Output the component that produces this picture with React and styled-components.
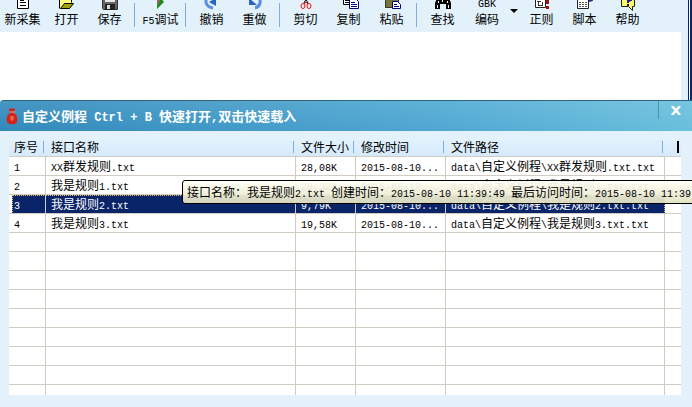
import React from 'react'
import styled, { css, createGlobalStyle } from 'styled-components'

const Navy = '#0a246a'
const Sky = '#e2f1fa'
const Line = '#d0ccc4'
const Focus = '#f0c060'

const files = [
  { id: 1, name: 'XX群发规则.txt', size: '28,08K', date: '2015-08-10...', path: 'data\\自定义例程\\XX群发规则.txt.txt' },
  { id: 2, name: '我是规则1.txt', size: '20,32K', date: '2015-08-10...', path: 'data\\自定义例程\\我是规则1.txt.txt' },
  { id: 3, name: '我是规则2.txt', size: '9,79K', date: '2015-08-10...', path: 'data\\自定义例程\\我是规则2.txt.txt' },
  { id: 4, name: '我是规则3.txt', size: '19,58K', date: '2015-08-10...', path: 'data\\自定义例程\\我是规则3.txt.txt' },
]

const emptyRows = [5, 6, 7, 8, 9, 10, 11, 12, 13]

// half-width characters are set in a mono face, half as wide as the Chinese ones
const Mixed = ({ children }) =>
  children.split(/([\x20-\x7e]+)/).filter(Boolean).map((part, i) =>
    /^[\x20-\x7e]/.test(part) ? <Half key={i}>{part}</Half> : part
  )

const icons = {
  create: (
    <>
      <path d="M6.5 3.5h8l3 3v15h-11z" fill="#fff" stroke="#000" />
      <path d="M9 10.5h6M9 13.5h4M9 15.5h6M9 18.5h6" stroke="#000" />
    </>
  ),
  open: (
    <>
      <path d="M4.5 21.5v-13h4l2 2h6v5" fill="#ffff80" stroke="#000" />
      <path d="M5.5 21.5l4-5h9l-4 5z" fill="#a0a000" stroke="#000" />
    </>
  ),
  save: (
    <>
      <path d="M4.5 5.5h15v17h-14l-1-1z" fill="#666" stroke="#333" />
      <path d="M7 6h10v9H7z" fill="#e8e8e8" />
      <path d="M7 17h10v6H7z" fill="#222" />
      <path d="M9 18h3v4H9z" fill="#ddd" />
    </>
  ),
  run: (
    <>
      <path d="M8 6l7 9-7 7z" fill="#189018" />
      <path d="M8 10h3v4l-3 5z" fill="#906868" />
    </>
  ),
  undo: (
    <>
      <path d="M8 9c-4 5-2 11 5 12" fill="none" stroke="#5b8fe0" strokeWidth="3" />
      <path d="M16 11v8l-7-4z" fill="#2a62c8" />
    </>
  ),
  redo: (
    <>
      <path d="M15 9c4 5 2 11-3 12" fill="none" stroke="#5b8fe0" strokeWidth="3" />
      <path d="M6 11v7h8z" fill="#2a62c8" />
    </>
  ),
  cut: (
    <>
      <path d="M9 7l5 9M15 7l-5 9" stroke="#000" fill="none" />
      <g fill="none" stroke="#f01010">
        <ellipse cx="9" cy="19" rx="2" ry="2.5" />
        <ellipse cx="15" cy="19" rx="2" ry="2.5" />
        <path d="M10 17l2-2 2 2" />
      </g>
    </>
  ),
  copy: (
    <>
      <path d="M6.5 6.5h8v11h-8z" fill="#fff" stroke="#000" />
      <path d="M8 13.5h5M8 15.5h5" stroke="#000" />
      <path d="M12.5 11.5h6l3 3v7h-9z" fill="#fff" stroke="#000080" />
      <path d="M14 15.5h4M14 17.5h6M14 19.5h6" stroke="#000080" />
    </>
  ),
  paste: (
    <>
      <path d="M5.5 6.5h13v14h-13z" fill="#77733c" stroke="#333" />
      <path d="M12.5 14.5h5l3 3v4h-8z" fill="#fff" stroke="#000080" />
      <path d="M14 17.5h3M14 19.5h5" stroke="#000080" />
    </>
  ),
  find: (
    <>
      <path d="M7 9h3v3h4V9h3l3 7v6h-5v-5h-6v5H4v-6z" fill="#000" />
      <path d="M7.5 14v2M6.5 18v3M16.5 14v2M17.5 18v3M11.5 13v2" stroke="#fff" />
    </>
  ),
  regex: (
    <>
      <path d="M5.5 6.5h10v14h-10z" fill="#fff" stroke="#222" />
      <path d="M7 11.5h7M7 14.5h4M8 18.5h5M8.5 15v3M12.5 15v3" stroke="#333" />
      <path d="M16 8h3v9h-3zM16 19h3v3h-3z" fill="#a01010" />
    </>
  ),
  script: (
    <>
      <path d="M4.5 12.5h11v9h-11z" fill="#fff" stroke="#222" />
      <path d="M6 15.5h8M6 17.5h8M6 19.5h8" stroke="#555" strokeDasharray="2 1" />
      <path d="M8 12h6l2 3 4-1-1-3z" fill="#1c2c78" />
    </>
  ),
  help: (
    <>
      <path d="M5.500 5.500h13v14h-2v4l-4-4h-7z" fill="#fffa60" stroke="#222" />
      <path d="M10 11v-2h5v4l-3 1v2M12 17v2" fill="none" stroke="#1010a0" strokeWidth="2" />
    </>
  ),
}

const Tool = ({ icon, label, width }) => (
  <ToolButton type="button" $width={width}>
    {icon === 'gbk' ? <Code>GBK</Code> : <ToolIcon viewBox="0 0 24 24" aria-hidden="true">{icons[icon]}</ToolIcon>}
    <span><Mixed>{label}</Mixed></span>
  </ToolButton>
)

export default function App() {
  return (
    <>
      <GlobalStyle />
      <Page>
        <MainWindow>
          <Toolbar>
            <Tool icon="create" label="新采集" width={45} />
            <Tool icon="open" label="打开" />
            <Tool icon="save" label="保存" />
            <Separator />
            <Tool icon="run" label="F5调试" />
            <Separator />
            <Tool icon="undo" label="撤销" />
            <Tool icon="redo" label="重做" />
            <Separator />
            <Tool icon="cut" label="剪切" />
            <Tool icon="copy" label="复制" />
            <Tool icon="paste" label="粘贴" />
            <Separator />
            <Tool icon="find" label="查找" />
            <Tool icon="gbk" label="编码" width={46} />
            <DropButton type="button" aria-label="编码">
              <svg width="8" height="4" viewBox="0 0 8 4"><path d="M0 0h8L4 4z" /></svg>
            </DropButton>
            <Tool icon="regex" label="正则" />
            <Tool icon="script" label="脚本" />
            <Tool icon="help" label="帮助" />
          </Toolbar>
          <Editor />
        </MainWindow>
        <Dialog>
          <TitleBar>
            <Pouch viewBox="0 0 12 18" aria-hidden="true">
              <path d="M3 1l2 1 2-1 2 1-1 4c3 2 4 5 3 9-1 3-9 3-10 0-1-4 0-7 3-9z" fill="#d8211c" />
              <path d="M4 5h5" stroke="#e8b090" strokeWidth="1" />
              <path d="M4 10h4M6 9v5M4 12h4" stroke="#f0805a" />
            </Pouch>
            <h1><Mixed>自定义例程 Ctrl + B 快速打开,双击快速载入</Mixed></h1>
            <CloseButton type="button" aria-label="关闭">
              <svg width="10" height="9" viewBox="0 0 10 9"><path d="M1 0l8 9M9 0L1 9" stroke="#fff" strokeWidth="2.500" /></svg>
            </CloseButton>
          </TitleBar>
          <ListFrame>
            <ListView>
              <Table>
                <colgroup>
                  <col width="37" />
                  <col width="250" />
                  <col width="60" />
                  <col width="90" />
                  <col />
                  <col width="16" />
                </colgroup>
                <thead>
                  <tr>
                    <th><Head>序号</Head></th>
                    <th><Head>接口名称</Head></th>
                    <th><Head>文件大小</Head></th>
                    <th><Head>修改时间</Head></th>
                    <th><Head>文件路径</Head></th>
                    <th><Head $dark /></th>
                  </tr>
                </thead>
                <tbody>
                  {files.map(file => (
                    <Row key={file.id} $selected={file.id === 3}>
                      <td><Mixed>{String(file.id)}</Mixed></td>
                      <td><Mixed>{file.name}</Mixed></td>
                      <td><Mixed>{file.size}</Mixed></td>
                      <td><Mixed>{file.date}</Mixed></td>
                      <td><Mixed>{file.path}</Mixed></td>
                      <td />
                    </Row>
                  ))}
                  {emptyRows.map(n => (
                    <Row key={n}><td /><td /><td /><td /><td /><td /></Row>
                  ))}
                </tbody>
              </Table>
            </ListView>
            <Tooltip role="tooltip">
              <Mixed>接口名称：我是规则2.txt 创建时间：2015-08-10 11:39:49 最后访问时间：2015-08-10 11:39</Mixed>
            </Tooltip>
          </ListFrame>
        </Dialog>
      </Page>
    </>
  )
}

const GlobalStyle = createGlobalStyle`
    *{
        box-sizing: border-box;
    }
    body{
        margin: 0;
        overflow: hidden;
        background: ${Sky};
        color: #000;
        font-family: "Noto Sans CJK SC", sans-serif;
        font-size: 12px;
        line-height: 18px;
    }
    button{
        padding: 0;
        border: none;
        background: none;
        color: inherit;
        font: inherit;
    }
`

const Half = styled.span`
    font-family: "Liberation Mono", monospace;
    font-size: 10px;
    line-height: 1;
    white-space: pre;
    h1 &{
        font-size: 12px;
    }
`

const Page = styled.div`
    display: flex;
    flex-direction: column;
    height: 100vh;
`

const MainWindow = styled.main`
    flex: none;
    margin-right: 4px;
    padding-right: 7px;
    box-shadow: 1px 0 ${Navy}, 2px 0 #fff, 4px 0 ${Navy};
`

const Toolbar = styled.div`
    display: flex;
    align-items: flex-end;
    height: 32px;
    padding-bottom: 5px;
    overflow: hidden;
`

const ToolButton = styled.button`
    display: flex;
    flex-direction: column;
    align-items: center;
    flex: none;
    width: ${({ $width }) => $width || 43}px;
    line-height: 16px;
    white-space: nowrap;
`

const ToolIcon = styled.svg`
    width: 24px;
    height: 24px;
`

const Code = styled.span`
    font-family: "Liberation Mono", monospace;
    font-size: 10px;
    line-height: 10px;
    padding-bottom: 1px;
`

const Separator = styled.i`
    flex: none;
    width: 1px;
    height: 24px;
    margin: 0 4px 0 3px;
    background: #7fb0dc;
`

const DropButton = styled.button`
    display: flex;
    flex: none;
    height: 18px;
    width: 10px;
`

const Editor = styled.div`
    height: 68px;
    background: #fff;
`

const Dialog = styled.section`
    display: flex;
    flex-direction: column;
    flex: 1;
    min-height: 0;
    background: ${Sky};
`

const TitleBar = styled.header`
    display: flex;
    align-items: center;
    flex: none;
    height: 31px;
    padding-left: 6px;
    border-top: 1px solid #2c6580;
    border-radius: 4px 0 0 0;
    background: linear-gradient(rgba(255,255,255, 0.1), rgba(255,255,255, 0)), linear-gradient(90deg, #3189bb, #4fa9d3 65%, #69bfdc);
    color: #fff;
    h1{
        flex: 1;
        margin: 0 0 0 4px;
        font-size: 13px;
        font-weight: 700;
        white-space: nowrap;
    }
`

const Pouch = styled.svg`
    width: 12px;
    height: 18px;
`

const CloseButton = styled.button`
    align-self: flex-start;
    display: flex;
    align-items: center;
    justify-content: center;
    width: 34px;
    height: 18px;
    border-left: 1px solid #4795b5;
`

const ListFrame = styled.div`
    position: relative;
    flex: 1;
    min-height: 0;
    margin: 6px 11px 12px 9px;
`

const ListView = styled.div`
    height: 100%;
    overflow: hidden;
    background: #fff;
`

const Table = styled.table`
    width: 100%;
    table-layout: fixed;
    border-collapse: separate;
    border-spacing: 0;
    th{
        height: 20px;
        padding: 0;
        border-bottom: 1px solid ${Line};
        background: linear-gradient(#e4f3fc, #d5eafc);
        font-weight: 400;
        text-align: left;
    }
    td{
        height: 19px;
        padding: 0 0 0 5px;
        border-right: 1px solid ${Line};
        border-bottom: 1px solid ${Line};
        line-height: 18px;
        overflow: hidden;
        white-space: nowrap;
    }
    td:last-child{
        border-right: none;
    }
`

const Head = styled.div`
    height: 12px;
    margin-right: 2px;
    padding-left: 5px;
    border-right: ${({ $dark }) => $dark ? '2px solid #000' : '1px solid #7fb0dc'};
    line-height: 12px;
    white-space: nowrap;
`

const Row = styled.tr`
    ${({ $selected }) => $selected && css`
        color: #fff;
        td:not(:last-child){
            background: linear-gradient(90deg, ${Focus} 1px, transparent 1px) 0 0 / 2px 1px repeat-x, ${Navy};
        }
        td:first-child{
            background:
                linear-gradient(#fff, #fff) 0 0 / 3px 100% no-repeat,
                linear-gradient(${Focus} 1px, transparent 1px) 3px 0 / 1px 2px repeat-y,
                linear-gradient(90deg, ${Focus} 1px, transparent 1px) 0 0 / 2px 1px repeat-x,
                ${Navy};
        }
        td:nth-last-child(2){
            border-right: 1px dotted ${Focus};
        }
    `}
`

const Tooltip = styled.div`
    position: absolute;
    top: 43px;
    left: 173px;
    right: -20px;
    height: 24px;
    padding-left: 4px;
    border: 1px solid #000;
    border-radius: 3px;
    background: linear-gradient(rgba(255,255,245, 0.94), rgba(226,226,194, 0.94));
    line-height: 22px;
    white-space: nowrap;
    overflow: hidden;
`
